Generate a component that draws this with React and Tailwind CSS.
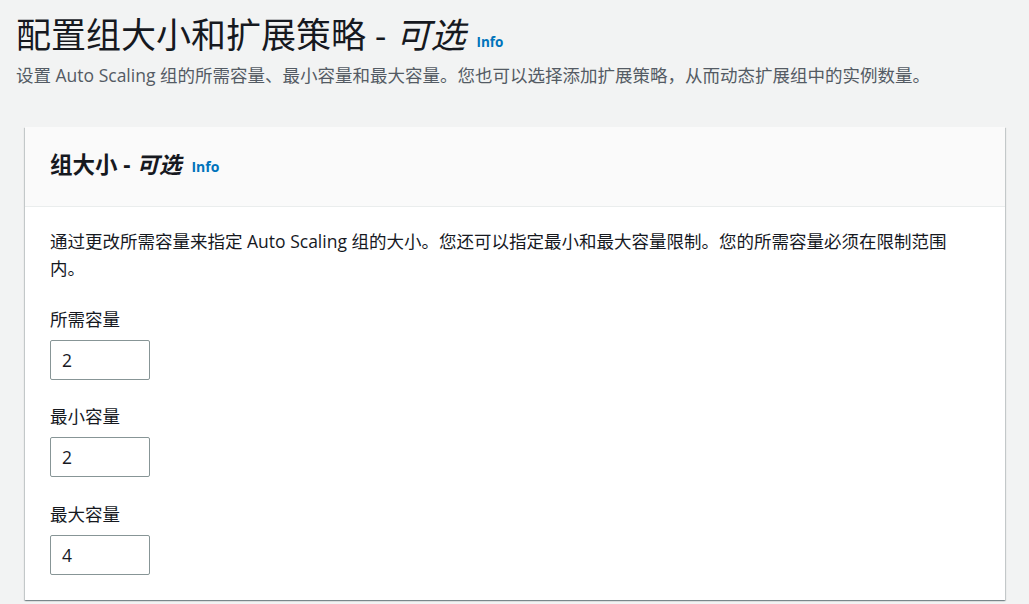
export default function App() {
  const font = { fontFamily: '"Open Sans", "Noto Sans CJK SC", sans-serif' };
  const Field = ({ label, value, className = "" }) => (
    <div className={`flex flex-col ${className}`}>
      <div className="text-[17.5px] leading-[27px] text-[#16191f]">{label}</div>
      <div className="mt-[7px] w-[100px] h-[40px] border border-[#879596] rounded-[2px] flex items-center px-[11px] text-[17.5px] text-[#16191f]">
        {value}
      </div>
    </div>
  );
  return (
    <div className="w-[1029px] h-[604px] bg-[#f2f3f3] overflow-hidden" style={font}>
      <div className="pl-[16px] pt-[13px]">
        <div className="flex items-end h-[44px]">
          <h1 className="text-[35px] leading-[44px] text-[#16191f] font-normal whitespace-nowrap">
            配置组大小和扩展策略 - <i>可选</i>
          </h1>
          <span className="ml-[11px] mb-[6px] text-[13.5px] leading-[18px] font-bold text-[#0073bb]">Info</span>
        </div>
        <p className="mt-[5px] text-[17.5px] leading-[27px] text-[#545b64] whitespace-nowrap">
          设置 Auto Scaling 组的所需容量、最小容量和最大容量。您也可以选择添加扩展策略，从而动态扩展组中的实例数量。
        </p>
      </div>
      <div className="ml-[25px] mt-[38px] w-[980px] bg-white shadow-[0_1px_1px_0_rgba(0,28,36,0.3),1px_1px_1px_0_rgba(0,28,36,0.15),-1px_1px_1px_0_rgba(0,28,36,0.15)]">
        <div className="h-[80px] bg-[#fafafa] border-b border-[#eaeded] flex items-center pl-[25px] pb-[3px]">
          <h2 className="text-[22.5px] leading-[30px] font-bold text-[#16191f] whitespace-nowrap">
            组大小 - <i>可选</i>
          </h2>
          <span className="ml-[10px] mt-[3px] text-[14px] font-bold text-[#0073bb]">Info</span>
        </div>
        <div className="px-[25px] pt-[21px] pb-[25px]">
          <p className="text-[17.5px] leading-[27px] text-[#16191f]">
            通过更改所需容量来指定 Auto Scaling 组的大小。您还可以指定最小和最大容量限制。您的所需容量必须在限制范围<br />内。
          </p>
          <div className="mt-[24px] flex flex-col">
            <Field label="所需容量" value="2" />
            <Field label="最小容量" value="2" className="mt-[23px]" />
            <Field label="最大容量" value="4" className="mt-[24px]" />
          </div>
        </div>
      </div>
    </div>
  );
}
